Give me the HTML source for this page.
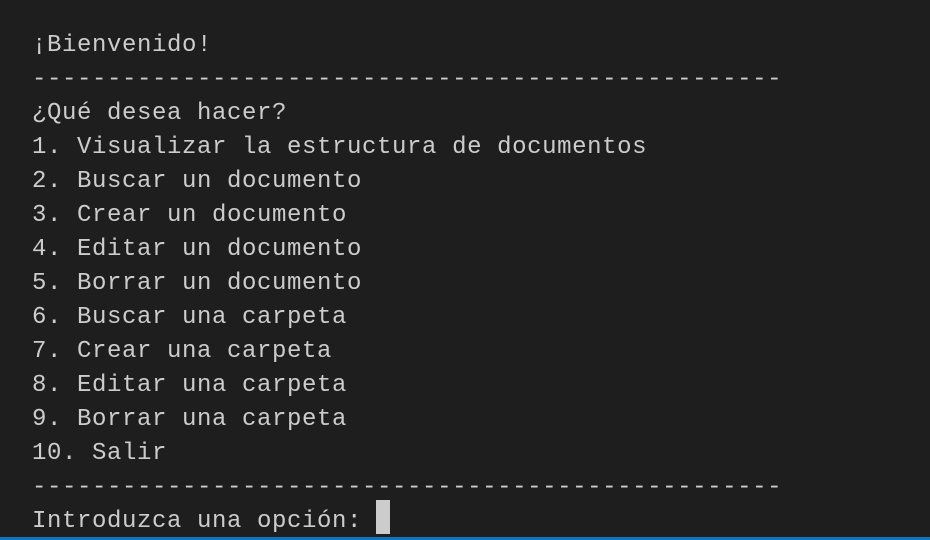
<!DOCTYPE html>
<html><head><meta charset="utf-8"><style>
html,body{margin:0;padding:0;}
body{width:930px;height:540px;background:#1e1e1e;position:relative;overflow:hidden;}
pre{position:absolute;left:32px;top:29px;margin:0;font-family:"Liberation Mono",monospace;font-size:24px;letter-spacing:0.6px;line-height:34px;color:#cccccc;}
.cur{position:absolute;left:376px;top:500px;width:14px;height:34px;background:#cccccc;}
.bar{position:absolute;left:0;bottom:0;width:930px;height:3px;background:#007acc;}
</style></head><body>
<pre>¡Bienvenido!
--------------------------------------------------
¿Qué desea hacer?
1. Visualizar la estructura de documentos
2. Buscar un documento
3. Crear un documento
4. Editar un documento
5. Borrar un documento
6. Buscar una carpeta
7. Crear una carpeta
8. Editar una carpeta
9. Borrar una carpeta
10. Salir
--------------------------------------------------
Introduzca una opción: </pre>
<div class="cur"></div>
<div class="bar"></div>
</body></html>
